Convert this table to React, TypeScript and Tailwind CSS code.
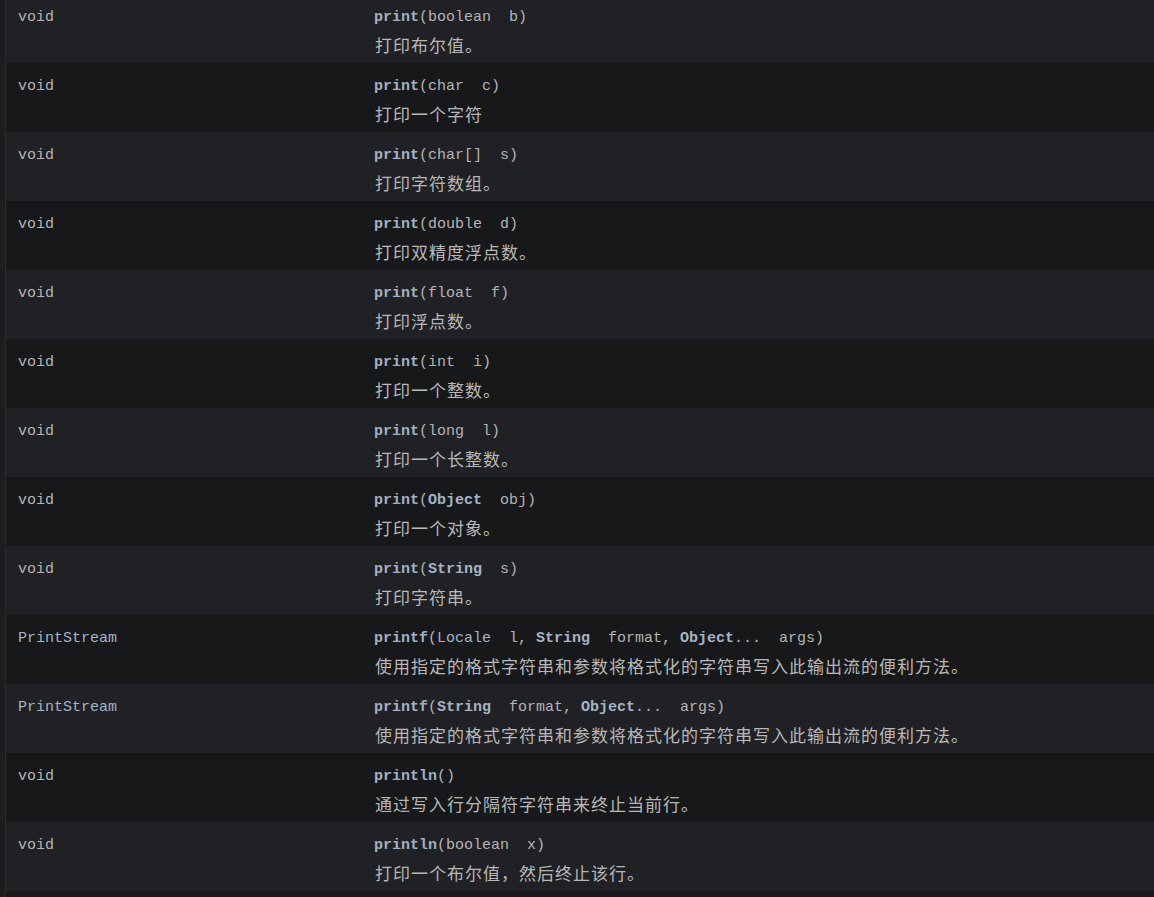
import React from "react";

type Part = { t: string; k?: "name" | "type" | "link" };

interface MethodRow {
  ret: string;
  retLink?: boolean;
  sig: Part[];
  desc: string;
}

const n = (t: string): Part => ({ t, k: "name" });
const p = (t: string): Part => ({ t });
const ty = (t: string): Part => ({ t, k: "type" });
const l = (t: string): Part => ({ t, k: "link" });

const ROWS: MethodRow[] = [
  { ret: "void", sig: [n("print"), p("(boolean  b)")], desc: "打印布尔值。" },
  { ret: "void", sig: [n("print"), p("(char  c)")], desc: "打印一个字符" },
  { ret: "void", sig: [n("print"), p("(char[]  s)")], desc: "打印字符数组。" },
  { ret: "void", sig: [n("print"), p("(double  d)")], desc: "打印双精度浮点数。" },
  { ret: "void", sig: [n("print"), p("(float  f)")], desc: "打印浮点数。" },
  { ret: "void", sig: [n("print"), p("(int  i)")], desc: "打印一个整数。" },
  { ret: "void", sig: [n("print"), p("(long  l)")], desc: "打印一个长整数。" },
  { ret: "void", sig: [n("print"), p("("), l("Object"), p("  obj)")], desc: "打印一个对象。" },
  { ret: "void", sig: [n("print"), p("("), l("String"), p("  s)")], desc: "打印字符串。" },
  {
    ret: "PrintStream",
    retLink: true,
    sig: [n("printf"), p("("), ty("Locale"), p("  l, "), l("String"), p("  format, "), l("Object"), p("...  args)")],
    desc: "使用指定的格式字符串和参数将格式化的字符串写入此输出流的便利方法。",
  },
  {
    ret: "PrintStream",
    retLink: true,
    sig: [n("printf"), p("("), l("String"), p("  format, "), l("Object"), p("...  args)")],
    desc: "使用指定的格式字符串和参数将格式化的字符串写入此输出流的便利方法。",
  },
  { ret: "void", sig: [n("println"), p("()")], desc: "通过写入行分隔符字符串来终止当前行。" },
  { ret: "void", sig: [n("println"), p("(boolean  x)")], desc: "打印一个布尔值，然后终止该行。" },
];

function partClass(k?: Part["k"]) {
  if (k === "name") return "font-bold text-[#a0b1c3]";
  if (k === "link") return "font-bold text-[#a4b4c5]";
  if (k === "type") return "text-[#a4b4c5]";
  return "text-[#b4b4b4]";
}

export default function App() {
  return (
    <div className="h-[897px] w-[1154px] overflow-hidden bg-[#1c1d1f] flex">
      <div className="w-[5px] shrink-0" />
      <div className="w-px shrink-0 bg-[#2a2c2f]" />
      <div className="flex-1 -mt-[6px]">
        {ROWS.map((row, i) => (
          <div
            key={i}
            className={`flex h-[69px] pt-[10px] ${i % 2 === 0 ? "bg-[#202124]" : "bg-[#17181a]"}`}
          >
            <div
              className={`w-[368px] shrink-0 pl-[12px] leading-[28px] text-[15px] font-['Liberation_Mono',monospace] whitespace-pre ${
                row.retLink ? "text-[#a4b4c5]" : "text-[#b4b4b4]"
              }`}
            >
              {row.ret}
            </div>
            <div className="flex flex-col">
              <div className="leading-[28px] text-[15px] font-['Liberation_Mono',monospace] whitespace-pre">
                {row.sig.map((part, j) => (
                  <span key={j} className={partClass(part.k)}>
                    {part.t}
                  </span>
                ))}
              </div>
              <div className="leading-[26px] text-[17px] tracking-[1px] text-[#b8b8b8] pl-px font-['Noto_Sans_CJK_SC','Noto_Sans',sans-serif]">
                {row.desc}
              </div>
            </div>
          </div>
        ))}
        <div className="h-[69px] bg-[#17181a]" />
      </div>
    </div>
  );
}
